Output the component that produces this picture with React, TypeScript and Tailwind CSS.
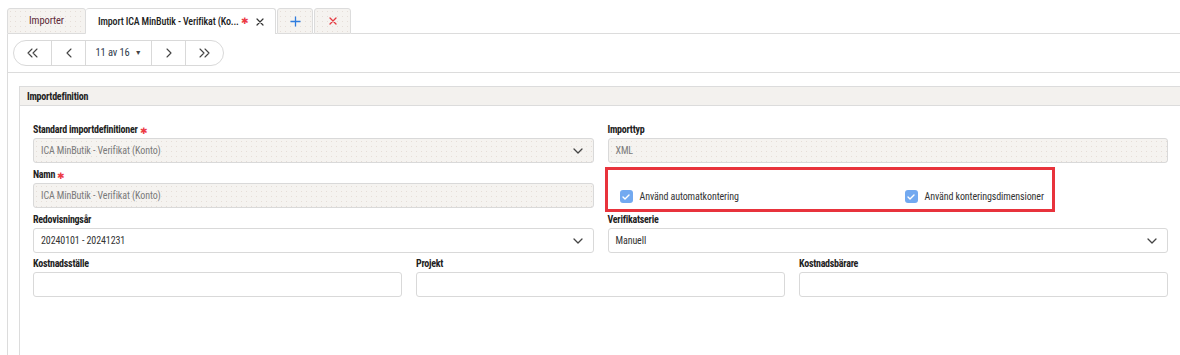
const dotted =
  "bg-[#f5f3f0] bg-[radial-gradient(circle,#e6ded8_0.7px,transparent_0.9px)] bg-[length:5px_5px]";

function Star() {
  return <span className="ml-[2px] text-[9px] leading-none text-[#ec3b44]">✱</span>;
}

function Chevron() {
  return (
    <svg width="10" height="6" viewBox="0 0 10 6" className="shrink-0">
      <path d="M1 1l4 4 4-4" fill="none" stroke="#444" strokeWidth="1.3" strokeLinecap="round" strokeLinejoin="round" />
    </svg>
  );
}

function Label({ text, required, last }: { text: string; required?: boolean; last?: boolean }) {
  return (
    <div className={`flex items-end pb-[2px] ${last ? "h-[19px]" : "h-[20px]"}`}>
      <span className="text-[10px] leading-[12px] font-bold tracking-[-0.25px] text-[#222]">{text}</span>
      {required && <Star />}
    </div>
  );
}

function Field({
  label,
  value,
  required,
  disabled,
  select,
  last,
}: {
  label: string;
  value?: string;
  required?: boolean;
  disabled?: boolean;
  select?: boolean;
  last?: boolean;
}) {
  return (
    <div>
      <Label text={label} required={required} last={last} />
      <div
        className={`flex h-[25px] items-center justify-between rounded-[3px] border border-[#d9d9d9] pl-[7px] pr-[10px] ${
          disabled ? dotted : "bg-white"
        }`}
      >
        <span className={`text-[10px] tracking-[-0.1px] ${disabled ? "text-[#7a7a7a]" : "text-[#333]"}`}>{value}</span>
        {select && <Chevron />}
      </div>
    </div>
  );
}

function Check({ text }: { text: string }) {
  return (
    <div className="flex items-center gap-[7px]">
      <span className="flex h-[13px] w-[13px] items-center justify-center rounded-[3px] bg-[#72a9f0]">
        <svg width="8" height="6" viewBox="0 0 8 6">
          <path d="M1 3l2 2 4-4" fill="none" stroke="#fff" strokeWidth="1.4" strokeLinecap="round" strokeLinejoin="round" />
        </svg>
      </span>
      <span className="text-[10px] tracking-[-0.1px] text-[#333]">{text}</span>
    </div>
  );
}

function NavBtn({ children, w, last }: { children: React.ReactNode; w: string; last?: boolean }) {
  return (
    <div className={`flex h-full items-center justify-center ${w} ${last ? "" : "border-r border-[#d9d9d9]"}`}>
      {children}
    </div>
  );
}

const arrow = { fill: "none", stroke: "#444", strokeWidth: 1.1, strokeLinecap: "round" as const, strokeLinejoin: "round" as const };

export default function App() {
  return (
    <div className="h-[355px] w-[1180px] overflow-hidden bg-white font-['Roboto_Condensed',Roboto,sans-serif] text-[#333]">
      {/* Tabs */}
      <div className="flex h-[34px] items-end pl-[7px]">
        <div className={`flex h-[26px] w-[79px] items-center justify-center rounded-t-[3px] border border-[#dcdcdc] ${dotted}`}>
          <span className="text-[10.5px] tracking-[-0.1px] text-[#5e2b38]">Importer</span>
        </div>
        <div className="flex h-[26px] w-[190px] items-center rounded-t-[3px] border-t border-r border-[#dcdcdc] bg-white pl-[12px]">
          <span className="text-[10px] font-medium tracking-[-0.15px] text-[#222]">Import ICA MinButik - Verifikat (Ko...</span>
          <Star />
          <svg width="8" height="8" viewBox="0 0 8 8" className="ml-[7px]">
            <path d="M1 1l6 6M7 1L1 7" stroke="#333" strokeWidth="1.2" strokeLinecap="round" />
          </svg>
        </div>
        <div className="h-[26px] w-[1px] border-b border-[#dcdcdc]" />
        <div className={`flex h-[26px] w-[36px] items-center justify-center rounded-t-[3px] border border-[#dcdcdc] ${dotted}`}>
          <svg width="11" height="11" viewBox="0 0 11 11">
            <path d="M5.5 0.5v10M0.5 5.5h10" stroke="#2f7ddf" strokeWidth="1.3" />
          </svg>
        </div>
        <div className="h-[26px] w-[1px] border-b border-[#dcdcdc]" />
        <div className={`flex h-[26px] w-[37px] items-center justify-center rounded-t-[3px] border border-[#dcdcdc] ${dotted}`}>
          <svg width="8" height="8" viewBox="0 0 8 8">
            <path d="M1 1l6 6M7 1L1 7" stroke="#e53940" strokeWidth="1.3" strokeLinecap="round" />
          </svg>
        </div>
        <div className="h-[26px] flex-1 border-b border-[#dcdcdc]" />
      </div>

      {/* Content */}
      <div className="ml-[7px] h-[321px] border-l border-[#dcdcdc]">
        {/* Toolbar */}
        <div className="h-[39px] border-b border-[#dcdcdc] pt-[6px] pl-[5px]">
          <div className="flex h-[26px] w-[211px] items-center rounded-full border border-[#d9d9d9] bg-white">
            <NavBtn w="w-[38px]">
              <svg width="11" height="10" viewBox="0 0 11 10">
                <path d="M5 1L1 5l4 4M10 1L6 5l4 4" {...arrow} />
              </svg>
            </NavBtn>
            <NavBtn w="w-[34px]">
              <svg width="6" height="10" viewBox="0 0 6 10">
                <path d="M5 1L1 5l4 4" {...arrow} />
              </svg>
            </NavBtn>
            <NavBtn w="w-[66px]">
              <span className="text-[10.5px] tracking-[-0.1px] text-[#2d3a4a]">11 av 16</span>
              <span className="ml-[5px] text-[7px] text-[#444]">▼</span>
            </NavBtn>
            <NavBtn w="w-[34px]">
              <svg width="6" height="10" viewBox="0 0 6 10">
                <path d="M1 1l4 4-4 4" {...arrow} />
              </svg>
            </NavBtn>
            <NavBtn w="w-[37px]" last>
              <svg width="11" height="10" viewBox="0 0 11 10">
                <path d="M1 1l4 4-4 4M6 1l4 4-4 4" {...arrow} />
              </svg>
            </NavBtn>
          </div>
        </div>

        {/* Panel */}
        <div className="mt-[13px] ml-[11px] h-[300px] border-l border-[#dcdcdc]">
          <div className="flex h-[20px] items-center border-y border-[#dcdcdc] bg-[#f3f1ee] pl-[7px]">
            <span className="text-[10px] font-bold tracking-[-0.25px] text-[#222]">Importdefinition</span>
          </div>
          <div className="pt-[12px] pr-[12px] pl-[13px]">
            <div className="grid grid-cols-2 gap-x-[14px]">
              <div>
                <Field label="Standard importdefinitioner" required disabled select value="ICA MinButik - Verifikat (Konto)" />
                <Field label="Namn" required disabled value="ICA MinButik - Verifikat (Konto)" />
                <Field label="Redovisningsår" select value="20240101 - 20241231" />
              </div>
              <div>
                <Field label="Importtyp" disabled value="XML" />
                <div className="relative h-[45px]">
                  <div className="flex pt-[26px] pl-[12px]">
                    <div className="w-[285px]">
                      <Check text="Använd automatkontering" />
                    </div>
                    <Check text="Använd konteringsdimensioner" />
                  </div>
                  <div className="pointer-events-none absolute top-[4px] left-[-3px] h-[45px] w-[450px] border-[3px] border-[#e8333c]" />
                </div>
                <Field label="Verifikatserie" select value="Manuell" />
              </div>
            </div>
            <div className="grid grid-cols-3 gap-x-[14px]">
              <Field label="Kostnadsställe" last />
              <Field label="Projekt" last />
              <Field label="Kostnadsbärare" last />
            </div>
          </div>
        </div>
      </div>
    </div>
  );
}
